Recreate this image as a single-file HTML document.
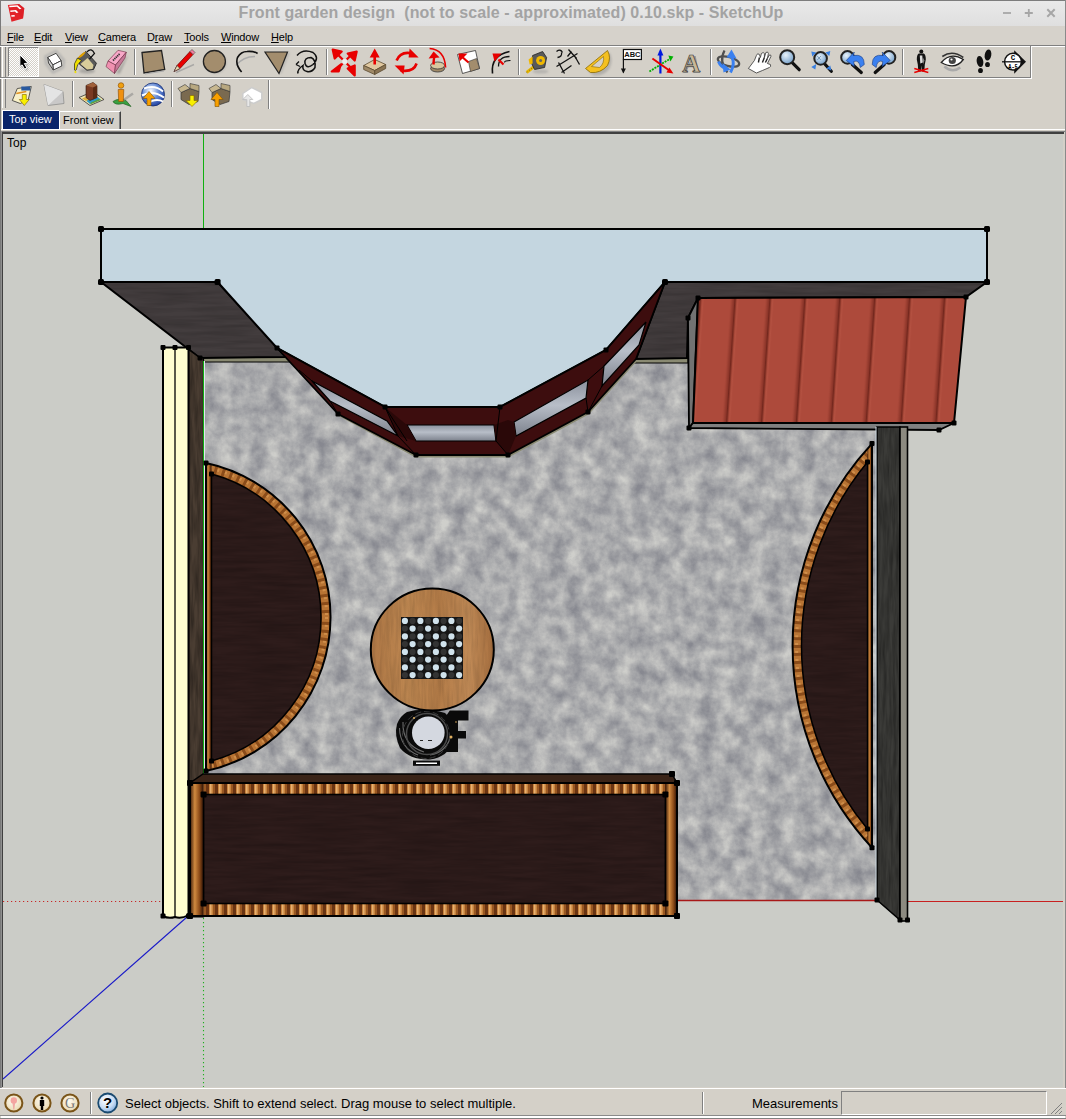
<!DOCTYPE html>
<html><head><meta charset="utf-8">
<style>
*{margin:0;padding:0;box-sizing:border-box}
html,body{width:1066px;height:1119px;overflow:hidden;background:#d4d0c8;font-family:"Liberation Sans",sans-serif}
.a{position:absolute}
#title{left:0;top:0;width:1066px;height:26px;background:linear-gradient(#e9e9e9,#dfdfdf);border-top:1px solid #7d7d7d}
#ttext{left:0;top:4px;width:1022px;text-align:center;font-weight:bold;font-size:16px;color:#a3a3a3;letter-spacing:0.1px;white-space:nowrap}
#menu{left:0;top:26px;width:1066px;height:20px;background:#d6d2cb}
.mi{top:31px;font-size:11px;color:#000;letter-spacing:-0.2px}
#tb1{left:0;top:46px;width:1031px;height:32px;border-top:1px solid #fff;border-bottom:1px solid #808080;border-right:1px solid #808080}
#tb2{left:0;top:78px;width:269px;height:31px;border-top:1px solid #fff;border-bottom:1px solid #808080;border-right:1px solid #808080}
.tab{font-size:11px;white-space:nowrap}
#status{left:0;top:1088px;width:1066px;height:31px;background:#d4d0c8;border-top:1px solid #fff}
</style></head><body>
<div id="title" class="a"></div>
<div id="ttext" class="a">Front garden design&nbsp; (not to scale - approximated) 0.10.skp - SketchUp</div>
<svg class="a" style="left:0;top:0" width="30" height="26" viewBox="0 0 30 26"><path d="M7.9,4.9 L19,4.1 L24.3,8.2 L23,18.4 L11.5,21.8 Z" fill="#e32228"/><path d="M19,4.1 L24.3,8.2 L23,18.4 L17,13 Z" fill="#d81e24" opacity="0.6"/>
<path d="M9.2,5.8 L17.6,5.2 L21.5,8.7 L19.5,9.2 L17,6.8 L9.5,7.3 Z" fill="#fff"/><path d="M10.2,10.5 L16,10 L18.5,12.5 L16.3,12.9 L15,11.5 L10.5,12 Z" fill="#fff"/><path d="M11.2,15.2 L14.6,14.9 L14.8,16.4 L11.5,16.8 Z" fill="#fff"/></svg>
<svg class="a" style="left:995px;top:4px" width="70" height="20" viewBox="995 4 70 20"><g stroke="#a6a6a6" stroke-width="1.8"><path d="M1003,13 H1011"/><path d="M1024.8,13 H1032.8 M1028.8,9 V17"/><path d="M1047.3,9.3 L1054.7,16.7 M1054.7,9.3 L1047.3,16.7" stroke-width="2"/></g></svg>
<div id="menu" class="a"></div>
<div class="a mi" style="left:7px"><u>F</u>ile</div>
<div class="a mi" style="left:34px"><u>E</u>dit</div>
<div class="a mi" style="left:65px"><u>V</u>iew</div>
<div class="a mi" style="left:98px"><u>C</u>amera</div>
<div class="a mi" style="left:147px">D<u>r</u>aw</div>
<div class="a mi" style="left:184px"><u>T</u>ools</div>
<div class="a mi" style="left:221px"><u>W</u>indow</div>
<div class="a mi" style="left:271px"><u>H</u>elp</div>
<div class="a" style="left:2px;top:110px;width:57px;height:19px;background:#0a246a;border-top:1px solid #fff;border-left:1px solid #fff"></div>
<div class="a tab" style="left:9px;top:113px;color:#fff">Top view</div>
<div class="a" style="left:59px;top:111px;width:62px;height:18px;border-top:1px solid #fff;border-left:1px solid #fff;border-right:1px solid #404040;box-shadow:inset -1px 0 0 #808080"></div>
<div class="a tab" style="left:63px;top:114px;color:#000">Front view</div>
<div class="a" style="left:0;top:129px;width:1066px;height:1px;background:#fff"></div>
<div class="a" style="left:0;top:131px;width:1066px;height:1px;background:#808080"></div><div class="a" style="left:2px;top:132px;width:1062px;height:2px;background:#404040"></div>
<div class="a" style="left:2px;top:133px;width:1px;height:954px;background:#404040"></div>
<div class="a" style="left:0;top:0;width:1px;height:1119px;background:#7a7a7a"></div><div class="a" style="left:1px;top:131px;width:1px;height:960px;background:#909090"></div>
<div class="a" style="left:1065px;top:0;width:1px;height:1119px;background:#8a8a8a"></div>
<div id="status" class="a"></div>
<div class="a" style="left:90px;top:1092px;width:1px;height:22px;background:#808080;box-shadow:1px 0 0 #fff"></div>
<div class="a" style="left:702px;top:1092px;width:1px;height:22px;background:#808080;box-shadow:1px 0 0 #fff"></div>
<div class="a" style="left:125px;top:1096px;font-size:13px;color:#000;white-space:nowrap">Select objects. Shift to extend select. Drag mouse to select multiple.</div>
<div class="a" style="left:752px;top:1096px;font-size:13px;color:#000;white-space:nowrap">Measurements</div>
<div class="a" style="left:841px;top:1091px;width:206px;height:24px;border-top:1px solid #808080;border-left:1px solid #808080;border-bottom:1px solid #fff;border-right:1px solid #fff"></div>
<div class="a" style="left:0;top:1115px;width:1066px;height:1px;background:#8a8a8a"></div>
<div class="a" style="left:1px;top:1116px;width:1064px;height:1.5px;background:#fff"></div>
<div class="a" style="left:0;top:1117.5px;width:1066px;height:1.5px;background:#808080"></div>

<svg class="a" style="left:0;top:0" width="1066" height="1119" viewBox="0 0 1066 1119">
<defs>
<clipPath id="vpc"><rect x="3" y="134" width="1060" height="953"/></clipPath>
<filter id="marble" x="0" y="0" width="100%" height="100%" color-interpolation-filters="sRGB"><feTurbulence type="fractalNoise" baseFrequency="0.06" numOctaves="5" seed="3" result="n"/><feColorMatrix in="n" type="matrix" values="1 0 0 0 0  1 0 0 0 0  1 0 0 0 0  0 0 0 0 1"/><feComponentTransfer><feFuncR type="linear" slope="1.4" intercept="-0.2"/><feFuncG type="linear" slope="1.4" intercept="-0.2"/><feFuncB type="linear" slope="1.4" intercept="-0.2"/></feComponentTransfer><feColorMatrix type="matrix" values="0.28 0 0 0 0.53  0 0.275 0 0 0.535  0 0 0.23 0 0.565  0 0 0 0 1"/><feComposite in2="SourceGraphic" operator="in"/></filter>
<filter id="grain" x="0" y="0" width="100%" height="100%" color-interpolation-filters="sRGB"><feTurbulence type="fractalNoise" baseFrequency="0.02 0.25" numOctaves="3" seed="4"/><feColorMatrix type="matrix" values="0 0 0 0 0  0 0 0 0 0  0 0 0 0 0  -0.6 0 0 0 0.42"/><feComposite in2="SourceGraphic" operator="in"/></filter>
<filter id="vgrain" x="0" y="0" width="100%" height="100%" color-interpolation-filters="sRGB"><feTurbulence type="fractalNoise" baseFrequency="0.3 0.03" numOctaves="3" seed="5"/><feColorMatrix type="matrix" values="0 0 0 0 0  0 0 0 0 0  0 0 0 0 0  -0.6 0 0 0 0.42"/><feComposite in2="SourceGraphic" operator="in"/></filter>
<linearGradient id="glass" x1="0" y1="0" x2="0" y2="1"><stop offset="0" stop-color="#8a909c"/><stop offset="0.45" stop-color="#b8bec8"/><stop offset="1" stop-color="#7c818c"/></linearGradient>
<linearGradient id="rimV" x1="0" y1="0" x2="1" y2="0"><stop offset="0" stop-color="#3a1a08"/><stop offset="0.35" stop-color="#d08a40"/><stop offset="0.7" stop-color="#8a4a18"/><stop offset="1" stop-color="#2a1005"/></linearGradient>
<linearGradient id="rimH" x1="0" y1="0" x2="0" y2="1"><stop offset="0" stop-color="#3a1a08"/><stop offset="0.4" stop-color="#c88038"/><stop offset="0.75" stop-color="#7a4014"/><stop offset="1" stop-color="#2a1005"/></linearGradient>
<pattern id="stripeH" width="9" height="12" patternUnits="userSpaceOnUse" x="190" y="783"><rect width="9" height="12" fill="#6a3412"/><rect x="1" width="4" height="12" fill="#c8843e"/><rect x="2" width="1.5" height="12" fill="#e8b070"/><rect x="5" width="2" height="12" fill="#9a5822"/></pattern>
<linearGradient id="shedL" x1="0" y1="0" x2="1" y2="0"><stop offset="0" stop-color="#ad4a3b"/><stop offset="0.45" stop-color="#8a3428"/><stop offset="0.6" stop-color="#6a2219"/><stop offset="0.75" stop-color="#a84838"/><stop offset="1" stop-color="#b85444"/></linearGradient>
<pattern id="shedP" width="34.9" height="400" patternUnits="userSpaceOnUse" x="0" y="0" patternTransform="skewX(-3.9)"><rect width="34.9" height="400" fill="#ad4a3b"/><rect x="18" width="8" height="400" fill="url(#shedL)"/></pattern>
<linearGradient id="tableG" x1="0" y1="0" x2="1" y2="0"><stop offset="0" stop-color="#b07846"/><stop offset="0.3" stop-color="#bc8650"/><stop offset="0.55" stop-color="#b47c48"/><stop offset="0.8" stop-color="#c08a56"/><stop offset="1" stop-color="#a87040"/></linearGradient>
</defs>
<g clip-path="url(#vpc)">
<rect x="3" y="134" width="1060" height="953" fill="#cbccc7"/>
<line x1="203.5" y1="134" x2="203.5" y2="361" stroke="#10b010" stroke-width="1"/>
<line x1="203.5" y1="918" x2="203.5" y2="1087" stroke="#20b020" stroke-width="1.1" stroke-dasharray="1.2,2.8"/>
<line x1="3" y1="901.5" x2="162" y2="901.5" stroke="#c82828" stroke-width="1.1" stroke-dasharray="1.2,2.8"/>
<line x1="907" y1="901.5" x2="1063" y2="901.5" stroke="#c82020" stroke-width="1"/>
<line x1="187" y1="917" x2="3" y2="1079" stroke="#1818c8" stroke-width="1.1"/>
<rect x="203" y="356" width="674" height="545" fill="#b2b2b6"/>
<rect x="203" y="356" width="674" height="545" fill="#d8d8d2" filter="url(#marble)"/>
<line x1="677" y1="900.5" x2="877" y2="900.5" stroke="#a81818" stroke-width="1.4"/>
<polygon points="203,356 286,356 290,362 203,362" fill="#8a8a72" stroke="#000" stroke-width="1"/>
<polygon points="630,358 688,358 688,363 626,363" fill="#8a8a72" stroke="#000" stroke-width="1"/>
<path d="M338,414 L416,456 L508,456 L588,413 L636,360" fill="none" stroke="#8a8a72" stroke-width="3"/>
<polygon points="101,282 217.6,282 286,357 200,358" fill="#433d3e"/>
<polygon points="101,282 217.6,282 286,357 200,358" fill="#fff" filter="url(#grain)" opacity="0.45"/>
<polygon points="101,282 217.6,282 286,357 200,358" fill="none" stroke="#000" stroke-width="2"/>
<polygon points="665,282 987,282 966,297 698,298 688,318 687,358 636,359" fill="#433d3e"/>
<polygon points="665,282 987,282 966,297 698,298 688,318 687,358 636,359" fill="#fff" filter="url(#grain)" opacity="0.45"/>
<polygon points="665,282 987,282 966,297 698,298 688,318 687,358 636,359" fill="none" stroke="#000" stroke-width="2"/>
<polygon points="101,229 987,229 987,282 665,282 606,350 500,407 385,407 277,348 217.6,282 101,282" fill="#c4d6e0" stroke="#000" stroke-width="2" stroke-linejoin="round"/>
<rect x="98" y="226" width="6" height="6" rx="1.5" fill="#000"/>
<rect x="984" y="226" width="6" height="6" rx="1.5" fill="#000"/>
<rect x="984" y="279" width="6" height="6" rx="1.5" fill="#000"/>
<rect x="98" y="279" width="6" height="6" rx="1.5" fill="#000"/>
<rect x="214.6" y="279" width="6" height="6" rx="1.5" fill="#000"/>
<rect x="662" y="279" width="6" height="6" rx="1.5" fill="#000"/>
<polygon points="277,348 385,407 500,407 606,350 665,282 636,359 588,412 508,455 416,455 338,414" fill="#3d0d0e" stroke="#000" stroke-width="1.8" stroke-linejoin="round"/>
<polygon points="312,381 387,421 398,436 330,401" fill="url(#glass)" stroke="#000" stroke-width="1.2"/>
<polygon points="407,425 494,425 496,441 416,441" fill="url(#glass)" stroke="#000" stroke-width="1.2"/>
<polygon points="514,422 588,380 586,398 516,436" fill="url(#glass)" stroke="#000" stroke-width="1.2"/>
<polygon points="604,366 646,322 639,345 602,386" fill="url(#glass)" stroke="#000" stroke-width="1.2"/>
<polygon points="385,407 407,425 416,441 398,436" fill="#2a0808"/>
<polygon points="494,425 508,420 514,422 516,436 508,455 496,441" fill="#2a0808"/>
<path d="M385,407 L407,441 M500,407 L496,441 L508,455 M385,407 L398,436 L416,455 M588,380 L604,366 M586,398 L588,412 M602,386 L588,412 M299,370 L312,381 M330,401 L338,414" fill="none" stroke="#000" stroke-width="1"/>
<rect x="382.5" y="404.5" width="5" height="5" rx="1" fill="#000"/>
<rect x="497.5" y="404.5" width="5" height="5" rx="1" fill="#000"/>
<rect x="413.5" y="452.5" width="5" height="5" rx="1" fill="#000"/>
<rect x="505.5" y="452.5" width="5" height="5" rx="1" fill="#000"/>
<rect x="603.5" y="347.5" width="5" height="5" rx="1" fill="#000"/>
<rect x="585.5" y="409.5" width="5" height="5" rx="1" fill="#000"/>
<rect x="335.5" y="411.5" width="5" height="5" rx="1" fill="#000"/>
<rect x="274.5" y="345.5" width="5" height="5" rx="1" fill="#000"/>
<polygon points="688,318 698,298 693,423 689,428" fill="#727272" stroke="#000" stroke-width="1.8"/>
<polygon points="689,428 693,423 954,423 939,430" fill="#808080" stroke="#000" stroke-width="1.8"/>
<polygon points="698,298 966,297 954,423 693,423" fill="url(#shedP)" stroke="#000" stroke-width="2"/>
<rect x="695.5" y="295.5" width="5" height="5" rx="1" fill="#000"/>
<rect x="963.5" y="294.5" width="5" height="5" rx="1" fill="#000"/>
<rect x="951.5" y="420.5" width="5" height="5" rx="1" fill="#000"/>
<rect x="686.5" y="425.5" width="5" height="5" rx="1" fill="#000"/>
<rect x="936.5" y="427.5" width="5" height="5" rx="1" fill="#000"/>
<rect x="685.5" y="315.5" width="5" height="5" rx="1" fill="#000"/>
<polygon points="188.5,349.6 200,358 203.5,358 203.5,917 188.5,917" fill="#4a3d32"/>
<polygon points="188.5,349.6 200,358 203.5,358 203.5,917 188.5,917" fill="#fff" filter="url(#vgrain)"/>
<polygon points="188.5,349.6 200,358 203.5,358 203.5,917 188.5,917" fill="none" stroke="#000" stroke-width="1.2"/>
<line x1="204.5" y1="361" x2="204.5" y2="774" stroke="#e0e8ee" stroke-width="1"/>
<line x1="203.5" y1="361" x2="203.5" y2="774" stroke="#10b010" stroke-width="1"/>
<path d="M163,347.5 L188.5,347.5 L188.5,915 Q181.5,919 175,917 Q168.5,919 163,916 Z" fill="#fffed0" stroke="#000" stroke-width="2"/>
<line x1="175" y1="347.5" x2="175" y2="917" stroke="#000" stroke-width="1.3"/>
<rect x="160.5" y="345.0" width="5" height="5" rx="1" fill="#000"/>
<rect x="172.5" y="345.0" width="5" height="5" rx="1" fill="#000"/>
<rect x="186.0" y="345.0" width="5" height="5" rx="1" fill="#000"/>
<rect x="197.5" y="355.5" width="5" height="5" rx="1" fill="#000"/>
<rect x="160.5" y="913.5" width="5" height="5" rx="1" fill="#000"/>
<rect x="186.0" y="913.5" width="5" height="5" rx="1" fill="#000"/>
<polygon points="877,427 900,427 900,920 877,900" fill="#3b3b38"/>
<polygon points="877,427 900,427 900,920 877,900" fill="#fff" filter="url(#vgrain)"/>
<polygon points="877,427 900,427 900,920 877,900" fill="none" stroke="#000" stroke-width="1.6"/>
<rect x="900" y="427" width="7.5" height="494" fill="#8c8a80" stroke="#000" stroke-width="1.6"/>
<line x1="876" y1="427" x2="876" y2="900" stroke="#c8d4dc" stroke-width="1"/>
<rect x="897.5" y="917.5" width="5" height="5" rx="1" fill="#000"/>
<rect x="905.0" y="917.5" width="5" height="5" rx="1" fill="#000"/>
<rect x="874.5" y="897.5" width="5" height="5" rx="1" fill="#000"/>
<clipPath id="pl1"><path d="M206,463 A157.49,157.49 0 0 1 206,771 Z"/></clipPath>
<path d="M206,463 A157.49,157.49 0 0 1 206,771 Z" fill="#8a4c1a"/>
<g clip-path="url(#pl1)"><circle cx="173.01" cy="617.0" r="153.49" fill="none" stroke="#b87434" stroke-width="9" stroke-dasharray="5,3"/><circle cx="173.01" cy="617.0" r="153.49" fill="none" stroke="#e0a05a" stroke-width="3" stroke-dasharray="2,6" opacity="0.6"/>
<rect x="206" y="463" width="5.5" height="308" fill="url(#rimV)"/></g>
<path d="M206,463 A157.49,157.49 0 0 1 206,771 Z" fill="none" stroke="#000" stroke-width="2"/>
<path d="M211.5,474 A148.78,148.78 0 0 1 211.5,761 Z" fill="#2e1c1b" stroke="#000" stroke-width="1.5"/>
<path d="M211.5,474 A148.78,148.78 0 0 1 211.5,761 Z" fill="#fff" filter="url(#grain)" opacity="0.6"/>
<rect x="203.5" y="460.5" width="5" height="5" rx="1" fill="#000"/>
<rect x="203.5" y="768.5" width="5" height="5" rx="1" fill="#000"/>
<rect x="209.0" y="471.5" width="5" height="5" rx="1" fill="#000"/>
<rect x="209.0" y="758.5" width="5" height="5" rx="1" fill="#000"/>
<clipPath id="pl2"><path d="M872,443.6 A296.78,296.78 0 0 0 872,847.7 Z"/></clipPath>
<path d="M872,443.6 A296.78,296.78 0 0 0 872,847.7 Z" fill="#8a4c1a"/>
<g clip-path="url(#pl2)"><circle cx="1089.38" cy="645.6500000000001" r="292.78" fill="none" stroke="#b87434" stroke-width="9" stroke-dasharray="5,3"/><circle cx="1089.38" cy="645.6500000000001" r="292.78" fill="none" stroke="#e0a05a" stroke-width="3" stroke-dasharray="2,6" opacity="0.6"/>
<rect x="867.5" y="443.6" width="4.5" height="404.1" fill="url(#rimV)"/></g>
<path d="M872,443.6 A296.78,296.78 0 0 0 872,847.7 Z" fill="none" stroke="#000" stroke-width="2"/>
<path d="M867.5,462 A288.09,288.09 0 0 0 867.5,829 Z" fill="#2e1c1b" stroke="#000" stroke-width="1.5"/>
<path d="M867.5,462 A288.09,288.09 0 0 0 867.5,829 Z" fill="#fff" filter="url(#grain)" opacity="0.6"/>
<rect x="869.5" y="441.1" width="5" height="5" rx="1" fill="#000"/>
<rect x="869.5" y="845.2" width="5" height="5" rx="1" fill="#000"/>
<rect x="865.0" y="459.5" width="5" height="5" rx="1" fill="#000"/>
<rect x="865.0" y="826.5" width="5" height="5" rx="1" fill="#000"/>
<polygon points="203,774 672,774 677,783 190,783" fill="#3a2418" stroke="#000" stroke-width="1.5"/>
<rect x="190" y="783" width="487" height="133" fill="url(#stripeH)"/>
<rect x="190" y="783" width="13.6" height="133" fill="url(#rimV)"/>
<rect x="665.4" y="783" width="11.6" height="133" fill="url(#rimV)"/>
<rect x="190" y="783" width="487" height="133" fill="none" stroke="#000" stroke-width="2"/>
<rect x="203.6" y="794.5" width="461.8" height="109" fill="#2e1c1b" stroke="#000" stroke-width="1.6"/>
<rect x="203.6" y="794.5" width="461.8" height="109" fill="#fff" filter="url(#grain)" opacity="0.6"/>
<rect x="187" y="780" width="6" height="6" rx="1" fill="#000"/>
<rect x="674" y="780" width="6" height="6" rx="1" fill="#000"/>
<rect x="187" y="913" width="6" height="6" rx="1" fill="#000"/>
<rect x="674" y="913" width="6" height="6" rx="1" fill="#000"/>
<rect x="200.6" y="791.5" width="6" height="6" rx="1" fill="#000"/>
<rect x="662.4" y="791.5" width="6" height="6" rx="1" fill="#000"/>
<rect x="200.6" y="900.5" width="6" height="6" rx="1" fill="#000"/>
<rect x="662.4" y="900.5" width="6" height="6" rx="1" fill="#000"/>
<rect x="669" y="771" width="6" height="6" rx="1" fill="#000"/>
<path d="M449.8,710.4 H468.5 V720.5 H458 V731 H466 V738.5 H458 V752 H446 V716 Z" fill="#0a0a0a"/>
<path d="M407,712 Q424,707 445,713 Q455,722 453,742 Q448,757 430,759.5 Q410,760 400,748 Q394,735 397,724 Q400,716 407,712 Z" fill="#0a0a0a"/>
<path d="M399.5,728 Q400,748 418,755 M403,722 Q402,745 424,752 M430,755 Q446,752 450,738" fill="none" stroke="#6a6a6a" stroke-width="1.1"/>
<circle cx="427" cy="734" r="20.5" fill="none" stroke="#4a4a4a" stroke-width="1.5"/><circle cx="426" cy="735" r="23.5" fill="none" stroke="#3a3a3a" stroke-width="1" stroke-dasharray="6,3"/>
<circle cx="428.3" cy="732.7" r="16.3" fill="#d4d8e0"/>
<path d="M420,740.5 H423 M428,740.5 H432" stroke="#222" stroke-width="1"/>
<rect x="413" y="760.6" width="27" height="5.2" fill="#0a0a0a"/><rect x="416" y="762.5" width="21" height="1.5" fill="#fff"/>
<circle cx="451" cy="737" r="1.5" fill="#e0b060"/><circle cx="414" cy="718" r="1" fill="#e0b060"/><circle cx="456" cy="722" r="0.8" fill="#e0b060"/>
<ellipse cx="432.3" cy="649.5" rx="61.5" ry="61" fill="url(#tableG)"/>
<ellipse cx="432.3" cy="649.5" rx="61.5" ry="61" fill="#fff" filter="url(#vgrain)" opacity="0.35"/>
<ellipse cx="432.3" cy="649.5" rx="61.5" ry="61" fill="none" stroke="#000" stroke-width="2"/>
<rect x="401" y="617" width="62" height="62" fill="#151515"/>
<circle cx="404.9" cy="620.9" r="3.1" fill="#d0e2ec"/>
<circle cx="412.6" cy="620.9" r="3.1" fill="#333"/>
<circle cx="420.4" cy="620.9" r="3.1" fill="#d0e2ec"/>
<circle cx="428.1" cy="620.9" r="3.1" fill="#333"/>
<circle cx="435.9" cy="620.9" r="3.1" fill="#d0e2ec"/>
<circle cx="443.6" cy="620.9" r="3.1" fill="#333"/>
<circle cx="451.4" cy="620.9" r="3.1" fill="#d0e2ec"/>
<circle cx="459.1" cy="620.9" r="3.1" fill="#333"/>
<circle cx="404.9" cy="628.6" r="3.1" fill="#333"/>
<circle cx="412.6" cy="628.6" r="3.1" fill="#d0e2ec"/>
<circle cx="420.4" cy="628.6" r="3.1" fill="#333"/>
<circle cx="428.1" cy="628.6" r="3.1" fill="#d0e2ec"/>
<circle cx="435.9" cy="628.6" r="3.1" fill="#333"/>
<circle cx="443.6" cy="628.6" r="3.1" fill="#d0e2ec"/>
<circle cx="451.4" cy="628.6" r="3.1" fill="#333"/>
<circle cx="459.1" cy="628.6" r="3.1" fill="#d0e2ec"/>
<circle cx="404.9" cy="636.4" r="3.1" fill="#d0e2ec"/>
<circle cx="412.6" cy="636.4" r="3.1" fill="#333"/>
<circle cx="420.4" cy="636.4" r="3.1" fill="#d0e2ec"/>
<circle cx="428.1" cy="636.4" r="3.1" fill="#333"/>
<circle cx="435.9" cy="636.4" r="3.1" fill="#d0e2ec"/>
<circle cx="443.6" cy="636.4" r="3.1" fill="#333"/>
<circle cx="451.4" cy="636.4" r="3.1" fill="#d0e2ec"/>
<circle cx="459.1" cy="636.4" r="3.1" fill="#333"/>
<circle cx="404.9" cy="644.1" r="3.1" fill="#333"/>
<circle cx="412.6" cy="644.1" r="3.1" fill="#d0e2ec"/>
<circle cx="420.4" cy="644.1" r="3.1" fill="#333"/>
<circle cx="428.1" cy="644.1" r="3.1" fill="#d0e2ec"/>
<circle cx="435.9" cy="644.1" r="3.1" fill="#333"/>
<circle cx="443.6" cy="644.1" r="3.1" fill="#d0e2ec"/>
<circle cx="451.4" cy="644.1" r="3.1" fill="#333"/>
<circle cx="459.1" cy="644.1" r="3.1" fill="#d0e2ec"/>
<circle cx="404.9" cy="651.9" r="3.1" fill="#d0e2ec"/>
<circle cx="412.6" cy="651.9" r="3.1" fill="#333"/>
<circle cx="420.4" cy="651.9" r="3.1" fill="#d0e2ec"/>
<circle cx="428.1" cy="651.9" r="3.1" fill="#333"/>
<circle cx="435.9" cy="651.9" r="3.1" fill="#d0e2ec"/>
<circle cx="443.6" cy="651.9" r="3.1" fill="#333"/>
<circle cx="451.4" cy="651.9" r="3.1" fill="#d0e2ec"/>
<circle cx="459.1" cy="651.9" r="3.1" fill="#333"/>
<circle cx="404.9" cy="659.6" r="3.1" fill="#333"/>
<circle cx="412.6" cy="659.6" r="3.1" fill="#d0e2ec"/>
<circle cx="420.4" cy="659.6" r="3.1" fill="#333"/>
<circle cx="428.1" cy="659.6" r="3.1" fill="#d0e2ec"/>
<circle cx="435.9" cy="659.6" r="3.1" fill="#333"/>
<circle cx="443.6" cy="659.6" r="3.1" fill="#d0e2ec"/>
<circle cx="451.4" cy="659.6" r="3.1" fill="#333"/>
<circle cx="459.1" cy="659.6" r="3.1" fill="#d0e2ec"/>
<circle cx="404.9" cy="667.4" r="3.1" fill="#d0e2ec"/>
<circle cx="412.6" cy="667.4" r="3.1" fill="#333"/>
<circle cx="420.4" cy="667.4" r="3.1" fill="#d0e2ec"/>
<circle cx="428.1" cy="667.4" r="3.1" fill="#333"/>
<circle cx="435.9" cy="667.4" r="3.1" fill="#d0e2ec"/>
<circle cx="443.6" cy="667.4" r="3.1" fill="#333"/>
<circle cx="451.4" cy="667.4" r="3.1" fill="#d0e2ec"/>
<circle cx="459.1" cy="667.4" r="3.1" fill="#333"/>
<circle cx="404.9" cy="675.1" r="3.1" fill="#333"/>
<circle cx="412.6" cy="675.1" r="3.1" fill="#d0e2ec"/>
<circle cx="420.4" cy="675.1" r="3.1" fill="#333"/>
<circle cx="428.1" cy="675.1" r="3.1" fill="#d0e2ec"/>
<circle cx="435.9" cy="675.1" r="3.1" fill="#333"/>
<circle cx="443.6" cy="675.1" r="3.1" fill="#d0e2ec"/>
<circle cx="451.4" cy="675.1" r="3.1" fill="#333"/>
<circle cx="459.1" cy="675.1" r="3.1" fill="#d0e2ec"/>
</g>
<text x="7" y="146.8" font-size="12" font-family="Liberation Sans" fill="#000">Top</text>
<defs><radialGradient id="sg" cx="0.45" cy="0.4" r="0.6"><stop offset="0" stop-color="#fffaf0"/><stop offset="1" stop-color="#e8d8b0"/></radialGradient></defs>
<g transform="translate(13.8,1103)"><circle r="8.6" fill="url(#sg)" stroke="#7a5418" stroke-width="2"/><circle cx="0" cy="-2.5" r="3.2" fill="#f4a4a0"/><path d="M-1.3,0 L1.3,0 L0.5,6.5 L-0.5,6.5 Z" fill="#f0a8a4"/></g>
<g transform="translate(42,1103)"><circle r="8.6" fill="url(#sg)" stroke="#7a5418" stroke-width="2"/><circle cx="0" cy="-5" r="1.6" fill="#000"/><path d="M-2.2,-3 H2.2 V3 H1.2 V7 H-1.2 V3 H-2.2 Z" fill="#000"/></g>
<g transform="translate(70,1103)"><circle r="8.6" fill="url(#sg)" stroke="#7a5418" stroke-width="2"/><text x="0" y="4.5" font-size="14" font-family="Liberation Serif" text-anchor="middle" fill="#777">G</text></g>
<defs><radialGradient id="hg" cx="0.4" cy="0.35" r="0.7"><stop offset="0" stop-color="#ffffff"/><stop offset="0.6" stop-color="#c8dcf4"/><stop offset="1" stop-color="#7aa8dc"/></radialGradient></defs>
<g transform="translate(107.7,1103)"><circle r="9.5" fill="url(#hg)" stroke="#1a4a70" stroke-width="1.8"/><text x="0" y="5.2" font-size="15" font-weight="bold" font-family="Liberation Sans" text-anchor="middle" fill="#000">?</text></g>
<path d="M1051,1114 L1062,1103 M1055,1114 L1062,1107 M1059,1114 L1062,1111" stroke="#808080" stroke-width="1"/>
</svg>
<svg class="a" style="left:0;top:0" width="1066" height="132" viewBox="0 0 1066 132">
<defs><pattern id="chk" width="2" height="2" patternUnits="userSpaceOnUse"><rect width="2" height="2" fill="#d4d0c8"/><rect width="1" height="1" fill="#fff"/><rect x="1" y="1" width="1" height="1" fill="#fff"/></pattern><filter id="bl" x="-50%" y="-50%" width="200%" height="200%"><feGaussianBlur stdDeviation="1"/></filter><radialGradient id="lens" cx="0.4" cy="0.35" r="0.7"><stop offset="0" stop-color="#e8f2fa"/><stop offset="1" stop-color="#6f9cc8"/></radialGradient><radialGradient id="globe" cx="0.4" cy="0.35" r="0.7"><stop offset="0" stop-color="#ffffff"/><stop offset="0.5" stop-color="#6a8fd8"/><stop offset="1" stop-color="#1a3a9a"/></radialGradient><radialGradient id="help" cx="0.4" cy="0.35" r="0.7"><stop offset="0" stop-color="#ffffff"/><stop offset="0.7" stop-color="#b8d4f0"/><stop offset="1" stop-color="#6a9ad0"/></radialGradient></defs>
<line x1="0" y1="45.5" x2="1066" y2="45.5" stroke="#808080"/>
<line x1="0" y1="46.5" x2="1065" y2="46.5" stroke="#fff"/>
<line x1="1030.5" y1="46" x2="1030.5" y2="78" stroke="#808080"/>
<line x1="0" y1="77.5" x2="1031" y2="77.5" stroke="#808080"/>
<line x1="0" y1="78.5" x2="1032" y2="78.5" stroke="#fff"/>
<line x1="1031.5" y1="47" x2="1031.5" y2="78" stroke="#fff"/>
<line x1="268.5" y1="80" x2="268.5" y2="109" stroke="#808080"/><line x1="269.5" y1="80" x2="269.5" y2="109" stroke="#fff"/>
<line x1="2.5" y1="47" x2="2.5" y2="77" stroke="#fff"/><line x1="5.5" y1="47" x2="5.5" y2="77" stroke="#808080"/>
<line x1="2.5" y1="79" x2="2.5" y2="108" stroke="#fff"/><line x1="5.5" y1="79" x2="5.5" y2="108" stroke="#808080"/>
<line x1="134.5" y1="49" x2="134.5" y2="75" stroke="#808080"/><line x1="135.5" y1="49" x2="135.5" y2="75" stroke="#fff"/>
<line x1="326.5" y1="49" x2="326.5" y2="75" stroke="#808080"/><line x1="327.5" y1="49" x2="327.5" y2="75" stroke="#fff"/>
<line x1="518.5" y1="49" x2="518.5" y2="75" stroke="#808080"/><line x1="519.5" y1="49" x2="519.5" y2="75" stroke="#fff"/>
<line x1="710.5" y1="49" x2="710.5" y2="75" stroke="#808080"/><line x1="711.5" y1="49" x2="711.5" y2="75" stroke="#fff"/>
<line x1="902.5" y1="49" x2="902.5" y2="75" stroke="#808080"/><line x1="903.5" y1="49" x2="903.5" y2="75" stroke="#fff"/>
<line x1="72.5" y1="81" x2="72.5" y2="107" stroke="#808080"/><line x1="73.5" y1="81" x2="73.5" y2="107" stroke="#fff"/>
<line x1="171.5" y1="81" x2="171.5" y2="107" stroke="#808080"/><line x1="172.5" y1="81" x2="172.5" y2="107" stroke="#fff"/>
<rect x="8" y="47" width="31" height="30" fill="url(#chk)"/>
<path d="M8.5,76.5 V47.5 H38.5" fill="none" stroke="#808080"/><path d="M8.5,76.5 H38.5 V47.5" fill="none" stroke="#fff"/>
<g transform="translate(23,61.5)"><path d="M-3.15,-6.75 V5.1 L-0.9,3.4 L1.6,7.6 L3.9,6.5 L1.3,2 L5,1.7 Z" fill="#444" opacity="0.45" transform="translate(1.3,1.6)" filter="url(#bl)"/><path d="M-3.15,-6.75 V5.1 L-0.9,3.4 L1.6,7.6 L3.9,6.5 L1.3,2 L5,1.7 Z" fill="#000" stroke="#fff" stroke-width="1" stroke-linejoin="round"/></g>
<g transform="translate(54,61.5)"><g filter="url(#bl)" opacity="0.75"><path d="M-8.5,-5 L2,-10.5 L10,-1 L9,6 L-1,11 L-8,2 Z" fill="none" stroke="#aaa" stroke-width="2.5"/></g><path d="M-6.3,-4.2 L2.1,-8.2 L7.2,-0.8 L-1.2,3.4 Z" fill="#fff" stroke="#444" stroke-width="1"/><path d="M-1.2,3.4 L7.2,-0.8 L7.8,4.5 L-0.7,8.5 Z" fill="#fafafa" stroke="#444" stroke-width="1"/><path d="M-6.3,-4.2 L-1.2,3.4 L-0.7,8.5 L-5.5,1.5 Z" fill="#cfcfcf" stroke="#444" stroke-width="1"/></g>
<g transform="translate(85,61.5)"><ellipse cx="2" cy="9.5" rx="8" ry="2.5" fill="#777" opacity="0.45" filter="url(#bl)"/><path d="M-7.7,-2.8 L0.8,-10.1 L11.4,1.7 L8.6,7.9 L1.9,8.7 L-5.4,2.8 Z" fill="#5a5a5a" stroke="#222" stroke-width="0.9"/><path d="M-4.5,2.5 L2.5,-3.5 L8.5,3.5 L7.5,7.5 L2,8 Z" fill="#d8cc9a"/><path d="M1.9,-9.6 Q6.5,-14.5 9.5,-8 L4.5,-2.5" fill="none" stroke="#111" stroke-width="1.3"/><path d="M-7.7,-2.8 Q-5,-8 0.8,-10.1 Q-1,-5 -7.7,-2.8 Z" fill="#e0a000"/><path d="M-7.5,-3.5 Q-12,2 -10.5,8.5 Q-9.5,10 -8.8,8.5 Q-8.5,3 -3.5,-1 Z" fill="#f0e000" stroke="#222" stroke-width="0.7"/><circle cx="-9.6" cy="10.6" r="1.1" fill="#f0e000"/></g>
<g transform="translate(116,61.5)"><path d="M0,12 L10,-4 L12,-6 L4,12 Z" fill="#777" opacity="0.5" filter="url(#bl)"/><path d="M-8,-0.5 L2,-11.2 L10.3,-9.3 L-0.5,3.5 Z" fill="#f8a8c8" stroke="#6a2a40" stroke-width="0.6"/><path d="M-10,5.1 L-8,-0.5 L-0.5,3.5 L-1.5,12 Z" fill="#f090b0" stroke="#6a2a40" stroke-width="0.6"/><path d="M-0.5,3.5 L10.3,-9.3 L9,-3.5 L-1.5,12 Z" fill="#c87898" stroke="#6a2a40" stroke-width="0.6"/><path d="M-3,-1 L4,-8" stroke="#333" stroke-width="1.8" stroke-dasharray="1.3,0.7"/></g>
<g transform="translate(153,61.5)"><path d="M-11,-9 L8.5,-11 L11.7,8 L-9,11.5 Z" fill="#a38d6d" stroke="#222" stroke-width="1.3"/><path d="M-8,12.5 L11,9.5" stroke="#aaa" stroke-width="1"/></g>
<g transform="translate(184,61.5)"><path d="M-8,11 L10,3" stroke="#999" stroke-width="1.5" opacity="0.7"/><path d="M-10,10 L-7,4 L6,-10 L9,-7 L-4,7 Z" fill="#e80000" stroke="#600" stroke-width="0.7"/><path d="M-10,10 L-7,4 L-4,7 Z" fill="#e8d8b0" stroke="#333" stroke-width="0.6"/><path d="M6,-10 L8,-12 L11,-9 L9,-7 Z" fill="#f080a0" stroke="#444" stroke-width="0.6"/></g>
<g transform="translate(214.4,61.5)"><circle cx="1" cy="1" r="11" fill="#999" opacity="0.45" filter="url(#bl)"/><circle r="11" fill="#a38d6d" stroke="#222" stroke-width="1.3"/></g>
<g transform="translate(246,61.5)"><path d="M-10,4 Q-3,-5 9,-5" fill="none" stroke="#aaa" stroke-width="1.3"/><path d="M-4.4,10.5 Q-11,3 -8.5,-4 Q-5,-10 1,-10 Q8,-10.5 11.6,-8" fill="none" stroke="#111" stroke-width="1.6"/></g>
<g transform="translate(276,61.5)"><path d="M-8,-8 L14,-9 L5,13 Z" fill="#999" opacity="0.4" filter="url(#bl)"/><path d="M-11,-9.5 L11.5,-9.5 L3,12 Z" fill="#a38d6d" stroke="#222" stroke-width="1.2"/></g>
<g transform="translate(307,61.5)"><path d="M-10,-6 Q-4,-13 6,-9 Q13,-4 6,3 Q0,8 -2,2 Q-3,-4 4,-4 Q9,-2 8,6 Q5,11 0,10 Q-5,9 -4,4 Q-10,8 -9,12" fill="none" stroke="#111" stroke-width="1.5"/><path d="M-11,3 L-8,0 M-11,3 L-7,5" stroke="#111" stroke-width="1.3"/></g>
<g transform="translate(344.7,61.5)"><g fill="#e80000" stroke="#e80000" stroke-width="2.2" stroke-linejoin="round"><path d="M-2,-2 L-7,-7" /><path d="M-12,-12 L-3,-10 L-10,-3 Z"/><path d="M2,-2 L7,-7" /><path d="M12,-10 L3,-8 L10,-1 Z"/><path d="M-2,2 L-7,7" /><path d="M-13,10 L-4,3 L-6,10 Z"/><path d="M2,2 L7,7" /><path d="M10,14 L3,7 L10,4 Z"/></g><circle r="2.5" fill="#eee"/></g>
<g transform="translate(374.7,61.5)"><path d="M-11,4 L0,-2 L11,3 L0,9 Z" fill="#e0c8a0" stroke="#5a4a30" stroke-width="0.8"/><path d="M-11,4 L0,9 L0,13 L-11,8 Z" fill="#a08a68" stroke="#5a4a30" stroke-width="0.8"/><path d="M0,9 L11,3 L11,7 L0,13 Z" fill="#8a7454" stroke="#5a4a30" stroke-width="0.8"/><path d="M-1.3,3 V-4 H-5 L0,-13 L5,-4 H1.3 V3 Z" fill="#e80000"/></g>
<g transform="translate(406.6,61.5)"><g fill="none" stroke="#e80000" stroke-width="2.6"><path d="M-10,-1 Q-6,-11 6,-8"/><path d="M10,2 Q7,11 -6,9"/></g><path d="M3,-13 L12,-4 L2,-4 Z" fill="#e80000"/><path d="M-3,13 L-12,4 L-2,4 Z" fill="#e80000"/></g>
<g transform="translate(436.6,61.5)"><ellipse cx="1" cy="7" rx="7" ry="3.5" fill="#a08a68" stroke="#333" stroke-width="0.8"/><ellipse cx="1" cy="4" rx="7" ry="3.5" fill="#d8c8a0" stroke="#333" stroke-width="0.8"/><path d="M-7,-13 Q8,-12 9,6" fill="none" stroke="#e80000" stroke-width="1.6"/><path d="M-3,3 Q-3,-3 -2,-5" fill="none" stroke="#e80000" stroke-width="2.4"/><path d="M-8,-3 L-3,-10 L3,-4 Z" fill="#e80000"/></g>
<g transform="translate(468.5,61.5)"><path d="M-11,-7 L7,-11 L11,7 L-6,12 Z" fill="#fff" stroke="#333" stroke-width="0.8"/><path d="M0,0 L8,-3 L11,7 L2,10 Z" fill="#a38d6d" stroke="#333" stroke-width="0.6"/><path d="M-8,-6 L0,1" stroke="#e80000" stroke-width="2.2"/><path d="M-10,-8 L-1,-8 L-9,0 Z" fill="#e80000"/></g>
<g transform="translate(499.5,61.5)"><g fill="none" stroke="#111" stroke-width="1.6"><path d="M-7,12 Q-9,-6 10,-10"/><path d="M-1,5 Q-1,-5 10,-5" stroke-width="1.3"/><path d="M5,1 Q5,-1 11,-1" stroke-width="1.2"/></g><path d="M-1,-2 L4,3" stroke="#e80000" stroke-width="2.2"/><path d="M-7,-8 L2,-8 L-5,0 Z" fill="#e80000"/></g>
<g transform="translate(536.6,61.5)"><path d="M-10,11 L0,3" stroke="#e8b800" stroke-width="3"/><path d="M-10,11 L0,3" stroke="#444" stroke-width="0.8" stroke-dasharray="1,2"/><ellipse cx="4" cy="10" rx="8" ry="2" fill="#999" opacity="0.5" filter="url(#bl)"/><path d="M-4,-6 L6,-10 L10,-4 L8,6 L-2,8 L-5,2 Z" fill="#5a5a5a" stroke="#222" stroke-width="0.8"/><circle cx="4" cy="-1" r="4.5" fill="#f0b800"/><circle cx="4" cy="-1" r="1.5" fill="#666"/><path d="M-8,-2 L-4,-5 L-4,2 L-7,3 Z" fill="#f0b800"/></g>
<g transform="translate(567.5,61.5)"><g stroke="#111" stroke-width="1.3" fill="none"><path d="M-11,5 L10,-8"/><path d="M-6,11 L4,4 M-9,1 L-3,12"/><path d="M1,-12 L9,-3 M4,-10 L0,-5"/><path d="M8,-4 L12,3"/><path d="M-11,-10 Q-7,-13 -5,-9 M-10,-4 Q-5,-5 -6,-9"/></g></g>
<g transform="translate(597.5,61.5)"><path d="M-12,7 L10,-11 Q14,-4 10,5 Q4,13 -6,12 Z" fill="#888" opacity="0.45" filter="url(#bl)" transform="translate(2,2)"/><path d="M-12,7 L10,-11 Q14,-4 10,4 Q3,12 -7,11 Z" fill="#f4c020" stroke="#8a6a00" stroke-width="0.8"/><path d="M-6,5 L6,-5 Q7,2 2,6 Z" fill="#d4d0c8" stroke="#8a6a00" stroke-width="0.6"/></g>
<g transform="translate(630.4,61.5)"><rect x="-7" y="-12" width="18" height="10" fill="#fff" stroke="#111" stroke-width="1.2"/><text x="2" y="-4.2" font-size="7.5" font-family="Liberation Sans" font-weight="bold" text-anchor="middle" fill="#111">ABC</text><path d="M-7,-2 V11" stroke="#111" stroke-width="1.2"/><path d="M-9.5,7 L-7,12 L-4.5,7 Z" fill="#111"/></g>
<g transform="translate(660.4,61.5)"><path d="M0,12 V-8" stroke="#0018e0" stroke-width="2.2"/><path d="M-3,-6 L0,-13 L3,-6 Z" fill="#0018e0"/><path d="M-11,10 L10,-3" stroke="#00b000" stroke-width="1.8" stroke-dasharray="2,1"/><path d="M8,-6 L13,-5 L10,0 Z" fill="#00b000"/><path d="M-8,-3 L9,9" stroke="#e80000" stroke-width="2"/><path d="M6,11 L13,12 L9,6 Z" fill="#e80000"/></g>
<g transform="translate(691.4,61.5)"><text x="1.5" y="11" font-size="25" font-family="Liberation Serif" font-weight="bold" font-style="italic" text-anchor="middle" fill="#777" opacity="0.6">A</text><text x="0" y="10" font-size="25" font-family="Liberation Serif" font-weight="bold" text-anchor="middle" fill="#c8b898" stroke="#333" stroke-width="0.7">A</text></g>
<g transform="translate(728.5,61.5)"><ellipse rx="11" ry="4.5" transform="rotate(15)" stroke="#505050" stroke-width="2.2" fill="none"/><path d="M-4,-11 Q-10,0 -1,11" fill="none" stroke="#505050" stroke-width="2.2"/><path d="M2,11 Q7,2 3,-5" fill="none" stroke="#3a80f0" stroke-width="3"/><path d="M-2,-4 L3,-12 L8,-3 Z" fill="#3a80f0"/><path d="M-10,0 Q-8,5 -3,7" fill="none" stroke="#3a80f0" stroke-width="3"/><path d="M-6,1.5 L2,8 L-5,11 Z" fill="#3a80f0"/></g>
<g transform="translate(759.4,61.5)"><path d="M-11,7 L-5,-1 L-3,-6 Q-2,-9 0,-7 L1,-4 L2,-8 Q4,-10 5,-8 L5,-4 L6.5,-9 Q8.5,-10.5 9,-8 L8,-3 L10,-6.5 Q12,-7 11.5,-5 L8,2 L11,3 Q12,5 10,6 L3,9 L-3,11.5 Z" fill="#fff" stroke="#333" stroke-width="0.8"/><path d="M0,-4 L-1,1 M5,-4 L3,1 M8,-3 L6,1" stroke="#222" stroke-width="1.4"/></g>
<g transform="translate(790.4,61.5)"><path d="M1.2999999999999998,0.7000000000000002 L8.8,8.2" stroke="#111" stroke-width="3.2" stroke-linecap="round"/><circle cx="-3.2" cy="-4.3" r="7" fill="url(#lens)" stroke="#222" stroke-width="2"/></g>
<g transform="translate(821.3,61.5)"><path d="M3.5,2.5 L10,9.8" stroke="#111" stroke-width="3.2" stroke-linecap="round"/><circle cx="-0.7" cy="-3.1" r="6.3" fill="url(#lens)" stroke="#222" stroke-width="2"/><path d="M-4,-5.5 L-0.5,-1.5 M-0.5,-5.5 L-4,-1.5" stroke="#7a9ab8" stroke-width="1"/><path d="M-10,-10 L-5,-9 L-9,-5 Z M9,-10.5 L8,-5.5 L4,-9 Z M-10,5.5 L-5,2.5 L-6,8 Z M9,4 L5,7 L10,9 Z" fill="#3a80e0"/></g>
<g transform="translate(852.3,61.5)"><path d="M0,3 L9,11" stroke="#111" stroke-width="3.2" stroke-linecap="round"/><circle cx="-4.8" cy="-4.1" r="6.3" fill="url(#lens)" stroke="#222" stroke-width="2"/><path d="M12,3 Q12,-8 1,-6 L2,-9.5 L-6,-1 L2,5 L1.5,0 Q7,-2 8,6 Z" fill="#3a80f0" stroke="#1a3a80" stroke-width="0.6"/></g>
<g transform="translate(884.2,61.5)"><path d="M0,3 L-9,11" stroke="#111" stroke-width="3.2" stroke-linecap="round"/><circle cx="4.8" cy="-4.1" r="6.3" fill="url(#lens)" stroke="#222" stroke-width="2"/><path d="M-12,3 Q-12,-8 -1,-6 L-2,-9.5 L6,-1 L-2,5 L-1.5,0 Q-7,-2 -8,6 Z" fill="#3a80f0" stroke="#1a3a80" stroke-width="0.6"/></g>
<g transform="translate(921.3,61.5)"><circle cx="0" cy="-10" r="2" fill="#111"/><path d="M-2.5,-8 H2.5 Q4.5,-7 4.5,-2 L3.5,3 L3,10 H0.5 L0,4 L-0.5,10 H-3 L-3.5,3 L-4.5,-2 Q-4.5,-7 -2.5,-8 Z" fill="#111"/><path d="M-1.5,-6 L1,-6 L1.5,1 L-1,2 Z" fill="#fff" opacity="0.85"/><path d="M2,-4 L3,-1 L2,3 Z" fill="#fff" opacity="0.7"/><path d="M-7,7 L7,11 M-7,11 L7,7" stroke="#e80000" stroke-width="1.4"/></g>
<g transform="translate(952.3,61.5)"><path d="M-11,1 Q-2,-10 11,-2 Q3,9 -11,1 Z" fill="#fff" stroke="#222" stroke-width="1.3"/><circle cx="0" cy="-1" r="3.6" fill="#444"/><circle cx="-0.8" cy="-2" r="1.1" fill="#fff"/><path d="M-10,-5 Q0,-12 11,-4" fill="none" stroke="#333" stroke-width="1.6"/><path d="M-8,5 Q0,12 8,6" fill="none" stroke="#aaa" stroke-width="2.5"/></g>
<g transform="translate(984,61.5)"><ellipse cx="-4" cy="0" rx="3.3" ry="5.5" fill="#111" transform="rotate(-10 -4 0)"/><ellipse cx="-3.5" cy="9" rx="2.4" ry="2.6" fill="#111"/><ellipse cx="4" cy="-6.5" rx="3.3" ry="5.5" fill="#111" transform="rotate(10 4 -6.5)"/><ellipse cx="3.5" cy="3" rx="2.4" ry="2.6" fill="#111"/></g>
<g transform="translate(1014.2,61.5)"><path d="M0,-11.3 L11.8,0.2 L0,12.2 Z" fill="#111"/><circle cx="-1.2" cy="0.2" r="8.4" fill="#fff" stroke="#111" stroke-width="1.5"/><path d="M-12.2,0.3 H8" stroke="#111" stroke-width="1.3"/><text x="-1.2" y="-1.6" font-size="7.5" font-family="Liberation Mono" font-weight="bold" text-anchor="middle" fill="#000">C</text><text x="-1.2" y="7.3" font-size="7" font-family="Liberation Mono" font-weight="bold" text-anchor="middle" fill="#000" textLength="9.5" lengthAdjust="spacingAndGlyphs">A-5</text></g>
<g transform="translate(22.3,94.5)"><path d="M-10,6 L-5,-6 L9,-8 L6,5 L-2,9 Z" fill="#f8f0c8" stroke="#333" stroke-width="0.8"/><path d="M-6,-1 L4,-3" stroke="#e09020" stroke-width="1.5"/><rect x="-1" y="-8" width="9" height="4" fill="#2a5aa0"/><path d="M0,0 H4 V5 H7 L2,11 L-3,5 H0 Z" fill="#f8f000" stroke="#806000" stroke-width="0.6"/></g>
<g transform="translate(54,94.5)"><path d="M-10,-10 L9,-3 L10,9 L-6,11 Z" fill="#c8c8c8" stroke="#888" stroke-width="0.8" opacity="0.9"/><path d="M-10,-10 L9,-3 L-6,11 Z" fill="#e4e4e4"/></g>
<g transform="translate(91,94.5)"><path d="M-12,3 L2,-3 L13,5 L-1,11 Z" fill="#f0e4b0" stroke="#333" stroke-width="0.8"/><path d="M-5,6 L6,2 L10,5 L-1,9.5 Z" fill="#2a9ac8"/><path d="M-9,4 L-2,1 L1,4 L-5,6.5 Z" fill="#e0b040"/><path d="M0,8 L8,4.5 L10,5.5 L-1,10 Z" fill="#5aa040"/><path d="M-5,-9 L2,-12 L6,-9 L6,3 L-1,6 L-5,3 Z" fill="#7a3a22" stroke="#2a1008" stroke-width="0.6"/><path d="M2,-9 L6,-9 L6,3 L2,5 Z" fill="#5a2a14"/><path d="M-5,-9 L2,-12 L6,-9 L2,-7 Z" fill="#a0603a"/></g>
<g transform="translate(121,94.5)"><path d="M-8,7 Q-2,3 5,6 L10,12 L2,9 Q-6,11 -8,7 Z" fill="#3aa040" stroke="#206020" stroke-width="0.7"/><path d="M2,6 L12,-1" stroke="#888" stroke-width="2.5" opacity="0.55"/><path d="M-2.8,-5 H2.8 L2.3,7 H-2.3 Z" fill="#f09010" stroke="#8a4a00" stroke-width="0.6"/><circle cx="0" cy="-9" r="2.8" fill="#f0a010" stroke="#8a4a00" stroke-width="0.6"/></g>
<g transform="translate(153,94.5)"><circle r="11.5" fill="url(#globe)" stroke="#1a3070" stroke-width="0.8"/><path d="M-9,-6 Q2,-10 10,-3 M-11,1 Q0,-5 11,3 M-6,9 Q3,3 10,7" fill="none" stroke="#fff" stroke-width="2"/><path d="M-6,11 V4 H-10 L-4,-3 L2,4 H-2 V11 Z" fill="#f8a000" stroke="#805000" stroke-width="0.6"/></g>
<g transform="translate(190,94.5)"><path d="M-9,-2 L0,-6 L9,-3 L8,7 L-1,10 L-9,5 Z" fill="#7a6a50" stroke="#333" stroke-width="0.7"/><path d="M-12,-6 L-5,-10 L0,-6 L-9,-2 Z" fill="#c8b890" stroke="#333" stroke-width="0.6"/><path d="M0,-11 L9,-9 L9,-3 L0,-6 Z" fill="#b8a880" stroke="#333" stroke-width="0.6"/><path d="M0,1 H4 V6 H8 L2,12 L-4,6 H0 Z" fill="#f8f000" stroke="#806000" stroke-width="0.6"/></g>
<g transform="translate(221,94.5)"><path d="M-9,-2 L0,-6 L9,-3 L8,7 L-1,10 L-9,5 Z" fill="#7a6a50" stroke="#333" stroke-width="0.7"/><path d="M-12,-6 L-5,-10 L0,-6 L-9,-2 Z" fill="#c8b890" stroke="#333" stroke-width="0.6"/><path d="M0,-11 L9,-9 L9,-3 L0,-6 Z" fill="#b8a880" stroke="#333" stroke-width="0.6"/><path d="M-6,12 V5 H-10 L-4,-2 L2,5 H-2 V12 Z" fill="#f8a000" stroke="#805000" stroke-width="0.6"/></g>
<g transform="translate(251.8,94.5)"><path d="M-9,-1 L0,-7 L10,-2 L10,5 L2,9 L-9,5 Z" fill="#fff" stroke="#ccc" stroke-width="1.5"/><path d="M-5,12 V5 H-9 L-4,0 L1,5 H-2 V12 Z" fill="#e8e8e8" stroke="#bbb" stroke-width="0.8"/></g>
</svg>
</body></html>
